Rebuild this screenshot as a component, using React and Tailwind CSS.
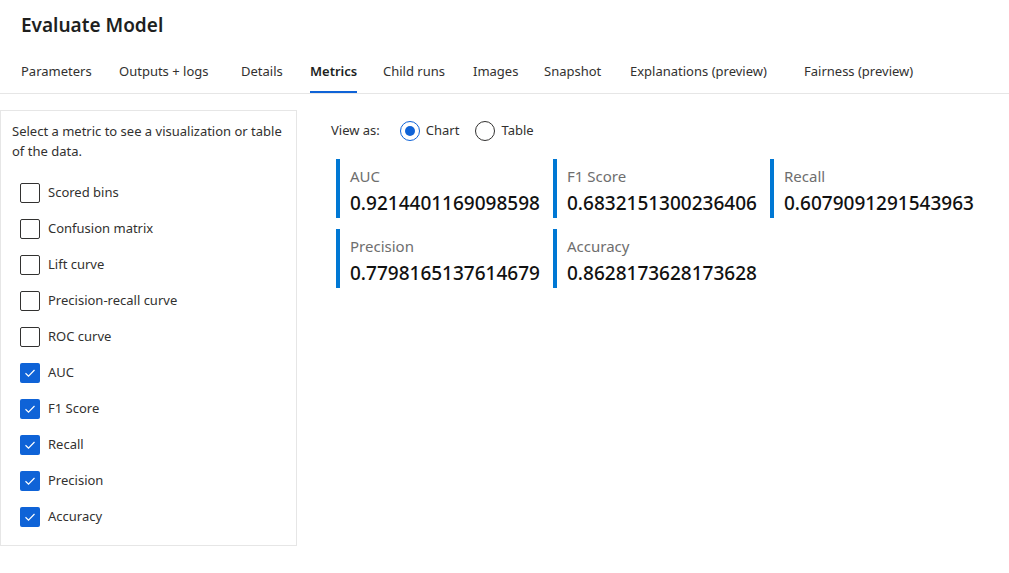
import React from 'react';

const font = { fontFamily: '"Noto Sans", "Open Sans", sans-serif' };

const tabs = [
  { name: 'Parameters', w: 'w-[98px]' },
  { name: 'Outputs + logs', w: 'w-[122px]' },
  { name: 'Details', w: 'w-[69px]' },
  { name: 'Metrics', w: 'w-[73px]', active: true },
  { name: 'Child runs', w: 'w-[90px]' },
  { name: 'Images', w: 'w-[71px]' },
  { name: 'Snapshot', w: 'w-[86px]' },
  { name: 'Explanations (preview)', w: 'w-[174px]' },
  { name: 'Fairness (preview)', w: 'w-[140px]' },
];

const options = [
  { name: 'Scored bins', checked: false },
  { name: 'Confusion matrix', checked: false },
  { name: 'Lift curve', checked: false },
  { name: 'Precision-recall curve', checked: false },
  { name: 'ROC curve', checked: false },
  { name: 'AUC', checked: true },
  { name: 'F1 Score', checked: true },
  { name: 'Recall', checked: true },
  { name: 'Precision', checked: true },
  { name: 'Accuracy', checked: true },
];

const metrics = [
  { name: 'AUC', value: '0.9214401169098598' },
  { name: 'F1 Score', value: '0.6832151300236406' },
  { name: 'Recall', value: '0.6079091291543963' },
  { name: 'Precision', value: '0.7798165137614679' },
  { name: 'Accuracy', value: '0.8628173628173628' },
];

const Checkbox = ({ checked }) => (
  checked ? (
    <span className="w-5 h-5 rounded-[2px] bg-[#0f63d7] flex items-center justify-center">
      <svg width="12" height="12" viewBox="0 0 12 12" fill="none">
        <path d="M1.5 6.3 L4.5 9.2 L10.5 3" stroke="white" strokeWidth="1.2" />
      </svg>
    </span>
  ) : (
    <span className="w-5 h-5 rounded-[2px] border border-[#323130] bg-white" />
  )
);

const App = () => {
  return (
    <div className="w-[1009px] h-[573px] bg-white text-[#323130] overflow-hidden" style={font}>
      <h1 className="pl-[21px] pt-[12px] text-[19px] font-semibold text-[#201f1e] leading-[26px]">Evaluate Model</h1>

      <div className="mt-[21px] flex border-b border-[#e6e6e6] pl-[21px] h-[35px]">
        {tabs.map((t) => (
          <div key={t.name} className={`${t.w} shrink-0 pt-[3px] text-[13px]`}>
            <span className={`relative inline-block h-[31px] ${t.active ? 'font-semibold text-[#201f1e]' : 'text-[#323130]'}`}>
              {t.name}
              {t.active && <span className="absolute left-0 right-0 bottom-0 h-[2px] bg-[#0f63d7]" />}
            </span>
          </div>
        ))}
      </div>

      <div className="flex mt-[16px]">
        <div className="w-[297px] border border-[#e6e6e6] pl-[11px] pr-[8px] pt-[10px] pb-[18px]">
          <p className="text-[13px] leading-[20px] text-[#323130]">Select a metric to see a visualization or table of the data.</p>
          <div className="mt-[22px] pl-[8px] flex flex-col gap-[16px]">
            {options.map((o) => (
              <label key={o.name} className="flex items-center gap-[8px] text-[13px] h-5">
                <Checkbox checked={o.checked} />
                <span>{o.name}</span>
              </label>
            ))}
          </div>
        </div>

        <div className="pl-[34px] pt-[10px]">
          <div className="flex items-center text-[13px] h-[22px]">
            <span className="mr-[20px]">View as:</span>
            <span className="w-5 h-5 rounded-full border border-[#0f63d7] flex items-center justify-center">
              <span className="w-[10px] h-[10px] rounded-full bg-[#0f63d7]" />
            </span>
            <span className="ml-[6px] mr-[16px]">Chart</span>
            <span className="w-5 h-5 rounded-full border border-[#323130]" />
            <span className="ml-[6px]">Table</span>
          </div>

          <div className="mt-[17px] ml-[5px] grid grid-cols-[217px_217px_217px] gap-y-[11px]">
            {metrics.map((m) => (
              <div key={m.name} className="border-l-4 border-[#0078d4] pl-[10px] pt-[7px] h-[59px]">
                <div className="text-[15px] text-[#6e6e6e] leading-[20px]">{m.name}</div>
                <div className="mt-[4px] text-[19px] font-medium text-[#111] leading-[27px]">{m.value}</div>
              </div>
            ))}
          </div>
        </div>
      </div>
    </div>
  );
};

export default App;
